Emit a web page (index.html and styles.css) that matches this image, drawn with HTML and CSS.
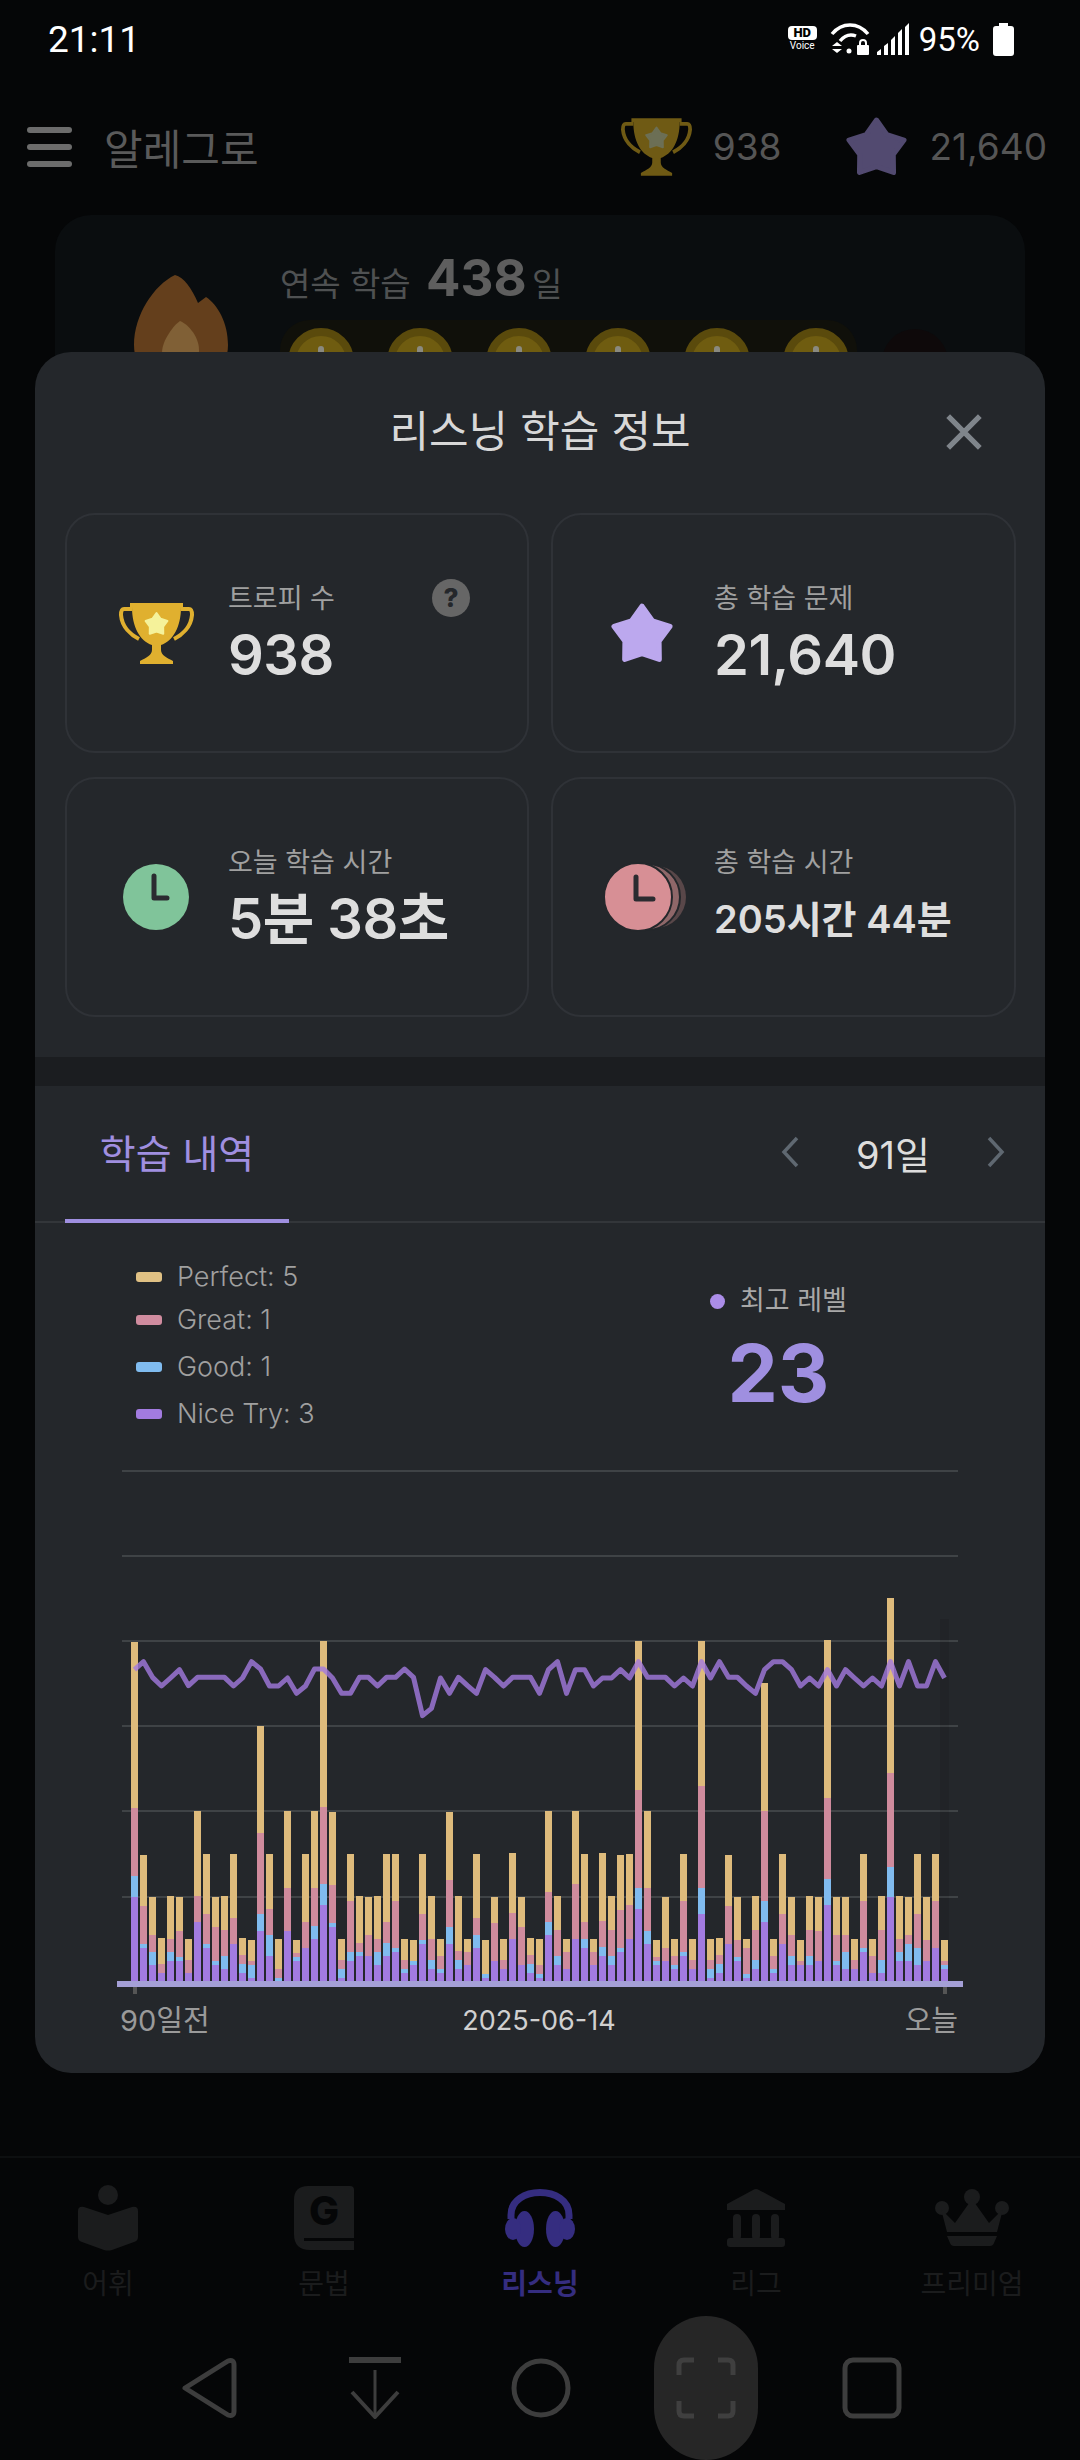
FILE: index.html
```html
<!DOCTYPE html>
<html lang="ko">
  <head>
    <meta charset="UTF-8" />
    <meta name="viewport" content="width=device-width, initial-scale=1.0" />
    <title>리스닝 학습 정보</title>
    <link rel="stylesheet" href="styles.css">
  </head>
  <body>
    <!-- shared shapes -->
    <svg class="defs" width="0" height="0">
      <symbol id="star" viewBox="0 0 100 100">
        <polygon fill="currentColor" stroke="currentColor" stroke-width="8" stroke-linejoin="round"
          points="50,8 66.5,31.3 93.7,39.8 76.6,62.7 77,91.2 50,82 23,91.2 23.4,62.7 6.3,39.8 33.5,31.3" />
      </symbol>
      <symbol id="trophy" viewBox="0 0 75 61">
        <path fill="currentColor" d="M11 0H64V4H62C62 24 54 38 42 42V47C42 52 48 55 54 58V61H21V58C27 55 33 52 33 47V42C21 38 13 24 13 4H11Z" />
        <path fill="none" stroke="currentColor" stroke-width="4" d="M13 6H5C2 6 2 9 2 12C3 24 12 32 20 36M62 6H70C73 6 73 9 73 12C72 24 63 32 55 36" />
        <use class="trophy-star" href="#star" x="25" y="7" width="25" height="27" />
      </symbol>
    </svg>

    <div class="screen">
      <!-- status bar -->
      <div class="status">
        <div class="time">21:11</div>
        <div class="status-icons">
          <div class="hd"><span class="hd-badge">HD</span><span class="hd-voice">Voice</span></div>
          <svg class="wifi" width="40" height="32" viewBox="0 0 40 32">
            <path fill="none" stroke="#fff" stroke-width="3.5" d="M2 11C12 -1 28 -1 38 11M10 18C15 12 21 11 26 13" />
            <circle cx="19" cy="28" r="2.5" fill="#fff" />
            <path fill="#fff" d="M7 19L12 23H2ZM2 26H12L7 30Z" />
            <path fill="none" stroke="#fff" stroke-width="2" d="M30 22V20C30 16 36 16 36 20V22" />
            <rect x="27" y="22" width="12" height="10" rx="1" fill="#fff" />
          </svg>
          <svg class="signal" width="32" height="32" viewBox="0 0 32 32">
            <path fill="#fff" d="M0 32V29L4 26V32ZM7 32V23L11 20V32ZM14 32V17L18 13V32ZM21 32V10L25 6V32ZM28 32V4L32 0V32Z" />
          </svg>
          <div class="percent">95%</div>
          <svg class="battery" width="21" height="33" viewBox="0 0 21 33">
            <path fill="#fff" d="M6 0H15V3H18Q21 3 21 6V30Q21 33 18 33H3Q0 33 0 30V6Q0 3 3 3H6Z" />
          </svg>
        </div>
      </div>

      <!-- app bar behind the sheet -->
      <div class="appbar">
        <div class="menu"><span></span><span></span><span></span></div>
        <div class="app-title">알레그로</div>
        <svg class="bar-trophy" width="71" height="58"><use href="#trophy" /></svg>
        <div class="bar-num">938</div>
        <svg class="bar-star" width="63" height="63"><use href="#star" /></svg>
        <div class="bar-num">21,640</div>
      </div>

      <div class="main">
        <div class="streak">
          <svg class="flame" width="94" height="110" viewBox="0 0 94 110">
            <path fill="#643f1c" d="M41 0C50 2 58 14 64 28L72 22C84 30 94 48 94 70C94 95 75 110 47 110C19 110 0 95 0 70C0 40 20 10 41 0Z" />
            <path fill="#806036" d="M46 46C52 48 65 60 65 75C65 95 56 105 46 105C36 105 28 95 28 78C28 65 40 50 46 46Z" />
          </svg>
          <div>
            <div class="streak-text">연속 학습 <b>438</b> 일</div>
            <div class="streak-row">
              <div class="coins">
                <div class="coin"></div>
                <div class="coin"></div>
                <div class="coin"></div>
                <div class="coin"></div>
                <div class="coin"></div>
                <div class="coin"></div>
              </div>
              <div class="coin coin-next"></div>
            </div>
          </div>
        </div>
      </div>

      <!-- bottom tabs -->
      <div class="tabbar">
        <div class="tab-item">
          <svg width="60" height="66" viewBox="0 0 60 66">
            <circle cx="30" cy="10" r="10" fill="currentColor" />
            <path fill="currentColor" d="M0 26Q0 21 6 22L30 30L54 22Q60 21 60 26V52Q60 56 56 57L34 65Q30 66 26 65L4 57Q0 56 0 52Z" />
          </svg>
          <div>어휘</div>
        </div>
        <div class="tab-item">
          <svg width="60" height="66" viewBox="0 0 60 66">
            <path fill="currentColor" d="M14 1H56Q60 1 60 5V65H16Q0 65 0 49V15Q0 1 14 1Z" />
            <rect x="10" y="53" width="50" height="3" fill="#050607" />
            <text class="book-letter" x="30" y="40" text-anchor="middle">G</text>
          </svg>
          <div>문법</div>
        </div>
        <div class="tab-item tab-on">
          <svg width="70" height="66" viewBox="0 -4 70 66">
            <path fill="none" stroke="currentColor" stroke-width="7" d="M6 30V26C6 -4 64 -4 64 26V30" />
            <ellipse cx="19.5" cy="40" rx="9.5" ry="18" fill="currentColor" />
            <ellipse cx="8" cy="40" rx="8" ry="11" fill="currentColor" />
            <ellipse cx="50.5" cy="40" rx="9.5" ry="18" fill="currentColor" />
            <ellipse cx="62" cy="40" rx="8" ry="11" fill="currentColor" />
          </svg>
          <div>리스닝</div>
        </div>
        <div class="tab-item">
          <svg width="58" height="66" viewBox="0 -4 58 66">
            <path fill="currentColor" d="M26 1Q29 -1 32 1L58 15V21H0V15Z" />
            <rect x="6" y="25" width="8" height="26" rx="4" fill="currentColor" />
            <rect x="25" y="25" width="8" height="26" rx="4" fill="currentColor" />
            <rect x="44" y="25" width="8" height="26" rx="4" fill="currentColor" />
            <rect x="0" y="49" width="58" height="9" rx="3" fill="currentColor" />
          </svg>
          <div>리그</div>
        </div>
        <div class="tab-item">
          <svg width="74" height="66" viewBox="0 -4 74 66">
            <circle cx="37" cy="8" r="8" fill="currentColor" />
            <circle cx="7" cy="19" r="7" fill="currentColor" />
            <circle cx="67" cy="19" r="7" fill="currentColor" />
            <path fill="currentColor" d="M6 20L20 34L37 10L54 34L68 20L62 43H12Z" />
            <path fill="currentColor" d="M12 47H62L59 54Q58 57 55 57H19Q16 57 15 54Z" />
          </svg>
          <div>프리미엄</div>
        </div>
      </div>

      <!-- system keys -->
      <div class="keys">
        <div class="key">
          <svg width="56" height="62" viewBox="0 0 56 62" class="key-icon">
            <path d="M3 31L46 4Q52 2 52 8V54Q52 60 46 58Z" />
          </svg>
        </div>
        <div class="key">
          <svg width="56" height="62" viewBox="0 0 56 62" class="key-icon">
            <path stroke-width="6" d="M2 3H54" />
            <path stroke-width="3" d="M28 13V58" />
            <path stroke-width="4" d="M5 35L28 60L51 35" />
          </svg>
        </div>
        <div class="key">
          <svg width="60" height="62" viewBox="0 0 60 62" class="key-icon">
            <circle cx="30" cy="31" r="27" />
          </svg>
        </div>
        <div class="key">
          <div class="key-pill">
            <svg width="60" height="62" viewBox="0 0 60 62" class="key-icon key-dim">
              <path d="M18 3H8Q3 3 3 8V18M42 3H52Q57 3 57 8V18M18 59H8Q3 59 3 54V44M42 59H52Q57 59 57 54V44" />
            </svg>
          </div>
        </div>
        <div class="key">
          <svg width="60" height="62" viewBox="0 0 60 62" class="key-icon">
            <rect x="3" y="3" width="54" height="56" rx="8" />
          </svg>
        </div>
      </div>

      <!-- 리스닝 학습 정보 sheet -->
      <div class="sheet">
        <div class="sheet-head">
          <div class="sheet-title">리스닝 학습 정보</div>
          <svg class="close" width="38" height="38" viewBox="0 0 36 36">
            <path d="M3 3L33 33M33 3L3 33" />
          </svg>
        </div>

        <div class="cards">
          <div class="card">
            <div class="card-icon">
              <svg width="75" height="61"><use class="gold" href="#trophy" /></svg>
            </div>
            <div class="card-text">
              <div class="card-label">트로피 수</div>
              <div class="card-value">938</div>
            </div>
            <div class="help">?</div>
          </div>
          <div class="card">
            <div class="card-icon">
              <svg class="violet" width="64" height="64"><use href="#star" /></svg>
            </div>
            <div class="card-text">
              <div class="card-label">총 학습 문제</div>
              <div class="card-value">21,640</div>
            </div>
          </div>
          <div class="card">
            <div class="card-icon">
              <svg width="66" height="66" viewBox="0 0 66 66">
                <circle cx="33" cy="33" r="33" fill="#80c49a" />
                <path class="hand" d="M31 12V34H44" />
              </svg>
            </div>
            <div class="card-text">
              <div class="card-label">오늘 학습 시간</div>
              <div class="card-value">5분 38초</div>
            </div>
          </div>
          <div class="card">
            <div class="card-icon">
              <svg width="90" height="70" viewBox="0 0 90 70">
                <circle cx="58" cy="35" r="31" fill="#594749" />
                <circle cx="50" cy="35" r="33" fill="#8f6769" stroke="#24272b" stroke-width="2" />
                <circle cx="41" cy="35" r="34" fill="#d78f95" stroke="#24272b" stroke-width="2" />
                <path class="hand" d="M39 15V37H56" />
              </svg>
            </div>
            <div class="card-text">
              <div class="card-label">총 학습 시간</div>
              <div class="card-value card-value-sm">205시간 44분</div>
            </div>
          </div>
        </div>

        <div class="band"></div>

        <div class="tabs">
          <div class="tab-active">학습 내역</div>
          <div class="period">
            <svg class="chev" width="18" height="32" viewBox="0 0 18 32"><path d="M16 2L3 16L16 30" /></svg>
            <div class="period-text">91일</div>
            <svg class="chev" width="18" height="32" viewBox="0 0 18 32"><path d="M2 2L15 16L2 30" /></svg>
          </div>
        </div>

        <div class="summary">
          <div class="legend">
            <div class="legend-row"><span class="swatch swatch-perfect"></span>Perfect: 5</div>
            <div class="legend-row"><span class="swatch swatch-great"></span>Great: 1</div>
            <div class="legend-row"><span class="swatch swatch-good"></span>Good: 1</div>
            <div class="legend-row"><span class="swatch swatch-nice"></span>Nice Try: 3</div>
          </div>
          <div class="best">
            <div class="best-label"><span class="best-dot"></span>최고 레벨</div>
            <div class="best-value">23</div>
          </div>
        </div>

        <svg id="chart" class="chart" width="1010" height="540" viewBox="35 1460 1010 540"></svg>

        <div class="axis">
          <div>90일전</div>
          <div class="axis-mid">2025-06-14</div>
          <div class="axis-end">오늘</div>
        </div>
      </div>
    </div>

    <script>
      // tops of the nice / good / great / perfect parts, in thirds of a pixel from y=1580
      const bars = [
        [954,891,687,189],[1107,1095,981,828],[1158,1119,1068,954],[1182,1182,1155,1077],[1146,1119,1080,951],
        [1146,1134,1056,954],[1182,1182,1143,1080],[1029,1029,951,696],[1107,1095,1005,825],[1158,1146,1044,954],
        [1170,1131,1053,951],[1095,1095,1017,825],[1182,1155,1128,1077],[1197,1158,1146,1083],[1056,1005,762,441],
        [1131,1068,990,825],[1207,1197,1170,1080],[1056,1056,927,696],[1146,1134,1122,1083],[1107,1107,1029,825],
        [1080,1041,927,696],[978,915,684,186],[1044,1032,918,699],[1197,1170,1143,1080],[1146,1119,966,825],
        [1131,1119,1092,951],[1131,1131,1068,954],[1158,1119,1080,951],[1131,1092,1029,825],[1119,1107,966,825],
        [1182,1170,1143,1080],[1158,1146,1146,1083],[1095,1083,1005,825],[1170,1143,1080,951],[1182,1170,1131,1080],
        [1095,1044,903,699],[1170,1143,1116,951],[1158,1158,1119,1080],[1107,1068,1017,825],[1197,1185,1185,1083],
        [1146,1146,1032,954],[1170,1170,1143,1080],[1080,1080,1002,822],[1158,1158,1044,954],[1182,1155,1128,1077],
        [1197,1185,1158,1080],[1068,1029,939,696],[1158,1131,1053,951],[1170,1170,1119,1080],[1080,1080,915,696],
        [1107,1080,1029,825],[1158,1158,1119,1080],[1131,1104,1026,822],[1158,1131,1053,951],[1119,1107,993,828],
        [1080,1080,978,825],[990,927,633,186],[1095,1056,927,696],[1158,1146,1134,1083],[1146,1146,1107,954],
        [1170,1158,1131,1080],[1131,1119,966,825],[1170,1170,1143,1080],[1005,927,621,186],[1197,1170,1143,1080],
        [1182,1155,1128,1077],[1095,1095,981,828],[1146,1134,1083,954],[1197,1185,1107,1080],[1170,1143,1053,951],
        [1029,966,696,312],[1182,1170,1131,1080],[1095,1095,1005,825],[1158,1131,1068,954],[1158,1158,1146,1083],
        [1158,1131,1053,951],[1146,1146,1056,954],[978,900,657,183],[1158,1146,1068,954],[1170,1119,1068,954],
        [1170,1170,1143,1080],[1119,1107,966,825],[1182,1182,1131,1080],[1182,1143,1053,951],[954,864,582,57],
        [1146,1119,1080,951],[1146,1095,1068,954],[1158,1107,1005,825],[1146,1146,1083,954],[1107,1107,966,825],
        [1170,1158,1146,1083]
      ];
      const level = [
        272,248,295,321,297,272,320,295,295,295,295,321,297,248,270,321,321,297,343,321,270,270,297,343,343,295,
        295,321,295,295,270,295,410,388,297,343,295,320,343,272,295,321,295,295,295,343,272,248,343,272,272,321,
        297,297,272,297,248,295,295,295,321,297,321,248,297,248,295,295,321,343,272,248,248,272,321,297,321,272,
        321,272,297,321,297,321,248,321,248,321,321,248,297
      ];
      const partClass = ["part-nice", "part-good", "part-great", "part-perfect"];
      const toY = (v) => 1580 + v / 3;
      let out = "";

      // grid
      [1471, 1556, 1641, 1726, 1811, 1897].forEach((y) => {
        out += `<rect class="grid" x="122" y="${y}" width="836" height="2" />`;
      });
      out += `<rect class="shade" x="940" y="1620" width="9" height="362" />`;

      // stacked bars
      bars.forEach((tops, i) => {
        const x = 131 + i * 9;
        let bottom = 1207;
        tops.forEach((top, p) => {
          if (top < bottom) {
            out += `<rect class="${partClass[p]}" x="${x}" y="${toY(top)}" width="7" height="${(bottom - top) / 3}" />`;
            bottom = top;
          }
        });
      });

      // axis and ticks
      out += `<rect class="axis-bar" x="117" y="1982" width="846" height="6" />`;
      out += `<rect class="tick" x="133" y="1988" width="4" height="7" />`;
      out += `<rect class="tick" x="943" y="1988" width="4" height="7" />`;

      // level line
      const pts = level.map((v, i) => `${134.5 + i * 9},${toY(v)}`).join(" ");
      out += `<polyline class="level-line" points="${pts}" />`;

      document.getElementById("chart").innerHTML = out;
    </script>
  </body>
</html>
```

FILE: styles.css
```css
/* page */
body {
  margin: 0;
  background-color: #050607;
  font-family: Inter, "Noto Sans CJK KR", sans-serif;
}

.defs {
  position: absolute;
}

.screen {
  position: relative;
  width: 1080px;
  height: 2460px;
  display: flex;
  flex-direction: column;
  overflow: hidden;
  background-color: #050607;
}

.trophy-star {
  color: var(--star-fill, #f5f29a);
}

/* status bar */
.status {
  height: 78px;
  display: flex;
  justify-content: space-between;
  align-items: center;
  padding: 0 66px 0 48px;
  color: #fff;
  font-family: Roboto, sans-serif;
}

.time {
  font-size: 37px;
}

.status-icons {
  display: flex;
  align-items: center;
}

.hd {
  width: 29px;
  display: flex;
  flex-direction: column;
  align-items: center;
}

.hd-badge {
  width: 29px;
  height: 14px;
  background-color: #fff;
  color: #000;
  border-radius: 4px;
  font-size: 13px;
  font-weight: 900;
  line-height: 14px;
  text-align: center;
}

.hd-voice {
  font-size: 10px;
  line-height: 12px;
}

.wifi {
  margin-left: 13px;
}

.signal {
  margin-left: 7px;
}

.percent {
  margin-left: 10px;
  font-size: 33px;
}

.battery {
  margin-left: 13px;
}

/* app bar */
.appbar {
  height: 137px;
  display: flex;
  align-items: center;
  padding: 0 33px 0 27px;
}

.menu {
  width: 45px;
  display: flex;
  flex-direction: column;
  gap: 11px;
}

.menu span {
  height: 6px;
  border-radius: 3px;
  background-color: #6c6c6c;
}

.app-title {
  margin-left: 32px;
  font-size: 42px;
  color: #5a5a5a;
}

.bar-trophy {
  margin-left: auto;
  color: #6f5a14;
  --star-fill: #6c6f55;
}

.bar-star {
  margin-left: 64px;
  color: #524a70;
}

.bar-num {
  margin-left: 21px;
  font-size: 37px;
  color: #555;
}

/* streak card behind the sheet */
.main {
  flex: 1;
  padding: 0 55px;
  overflow: hidden;
}

.streak {
  height: 400px;
  display: flex;
  align-items: flex-start;
  padding: 38px 0 0 79px;
  border-radius: 36px;
  background-color: #0a0d0f;
}

.flame {
  margin: 22px 52px 0 0;
}

.streak-text {
  height: 62px;
  font-size: 33px;
  line-height: 50px;
  color: #4f5152;
}

.streak-text b {
  margin: 0 -4px 0 6px;
  font-size: 51px;
  color: #5e5e5e;
}

.streak-row {
  margin-top: 5px;
  display: flex;
  align-items: flex-start;
}

.coins {
  display: flex;
  gap: 33px;
  padding: 8px;
  border-radius: 30px;
  background-color: #10100a;
}

.coin {
  position: relative;
  box-sizing: border-box;
  width: 66px;
  height: 66px;
  border: 8px solid #5a4a0c;
  border-radius: 50%;
  background-color: #6f5c10;
}

.coin::after {
  content: "";
  position: absolute;
  left: 22px;
  top: 10px;
  width: 6px;
  height: 20px;
  border-radius: 3px;
  background-color: #8a8a80;
}

.coin-next {
  margin: 9px 0 0 25px;
  border: none;
  background-color: #0e090a;
}

.coin-next::after {
  display: none;
}

/* bottom tabs */
.tabbar {
  height: 160px;
  box-sizing: border-box;
  display: flex;
  border-top: 2px solid #0d0f10;
  color: #1b1c1d;
}

.tab-item {
  width: 216px;
  padding-top: 27px;
  display: flex;
  flex-direction: column;
  align-items: center;
  gap: 13px;
  font-size: 28px;
  line-height: 40px;
}

.tab-on {
  color: #352d80;
  font-weight: 700;
}

.book-letter {
  font-size: 40px;
  font-weight: 800;
  fill: #050607;
}

/* system keys */
.keys {
  height: 144px;
  display: flex;
  padding-left: 127px;
}

.key {
  width: 165.5px;
  display: flex;
  justify-content: center;
  align-items: center;
}

.key-icon {
  fill: none;
  stroke: #3d3d3d;
  stroke-width: 5;
  stroke-linejoin: round;
}

.key-pill {
  width: 104px;
  height: 144px;
  display: flex;
  justify-content: center;
  align-items: center;
  border-radius: 52px;
  background-color: #262626;
}

.key-dim {
  stroke: #3f3f3f;
}

/* sheet */
.sheet {
  position: absolute;
  left: 35px;
  top: 352px;
  width: 1010px;
  height: 1721px;
  border-radius: 36px;
  background-color: #24272b;
  overflow: hidden;
}

.sheet-head {
  position: relative;
  height: 161px;
}

.sheet-title {
  padding-top: 50px;
  font-size: 43px;
  line-height: 58px;
  text-align: center;
  color: #d8d8d8;
}

.close {
  position: absolute;
  right: 62px;
  top: 61px;
  fill: none;
  stroke: #7f858b;
  stroke-width: 5;
}

.cards {
  display: grid;
  grid-template-columns: 464px 465px;
  grid-auto-rows: 240px;
  gap: 24px 22px;
  padding: 0 30px;
}

.card {
  position: relative;
  box-sizing: border-box;
  display: flex;
  align-items: center;
  padding-left: 44px;
  border: 2px solid #2f3237;
  border-radius: 30px;
}

.card-icon {
  width: 90px;
  height: 90px;
  margin-right: 27px;
  display: flex;
  justify-content: center;
  align-items: center;
}

.gold {
  color: #e0b02f;
}

.violet {
  color: #bca8ee;
}

.hand {
  fill: none;
  stroke: #2b2b30;
  stroke-width: 5;
  stroke-linecap: round;
  stroke-linejoin: round;
}

.card-text {
  display: flex;
  flex-direction: column;
  gap: 8px;
}

.card-label {
  font-size: 27px;
  line-height: 36px;
  color: #a0a0a0;
}

.card-value {
  font-size: 56px;
  font-weight: 600;
  line-height: 60px;
  letter-spacing: -0.5px;
  color: #dedede;
}

.card-value-sm {
  font-size: 38px;
  letter-spacing: 0;
}

.help {
  position: absolute;
  right: 57px;
  top: 64px;
  width: 38px;
  height: 38px;
  border-radius: 50%;
  background-color: #666;
  color: #24272b;
  font-size: 26px;
  font-weight: 800;
  line-height: 38px;
  text-align: center;
}

.band {
  height: 29px;
  margin-top: 40px;
  background-color: #1b1d20;
}

/* history tab */
.tabs {
  height: 137px;
  box-sizing: border-box;
  display: flex;
  justify-content: space-between;
  border-bottom: 2px solid #33363a;
}

.tab-active {
  width: 224px;
  height: 137px;
  box-sizing: border-box;
  margin-left: 30px;
  border-bottom: 4px solid #9f8fe0;
  font-size: 39px;
  line-height: 136px;
  text-align: center;
  color: #a08fe0;
}

.period {
  display: flex;
  align-items: center;
  gap: 57px;
  padding: 0 40px 0 0;
  height: 132px;
}

.period-text {
  font-size: 38px;
  color: #ddd;
}

.chev {
  fill: none;
  stroke: #5f6871;
  stroke-width: 3.5;
}

.summary {
  height: 236px;
  display: flex;
}

.legend {
  width: 574px;
  padding: 30px 0 0 101px;
}

.legend-row {
  display: flex;
  align-items: center;
  gap: 15px;
  height: 47px;
  font-size: 27px;
  font-weight: 300;
  color: #a0a0a0;
}

.legend-row:first-child {
  margin-bottom: -4px;
}

.swatch {
  width: 26px;
  height: 10px;
  border-radius: 3px;
}

.swatch-perfect {
  background-color: #e0c184;
}

.swatch-great {
  background-color: #d08c9f;
}

.swatch-good {
  background-color: #80bcf0;
}

.swatch-nice {
  background-color: #a27be0;
}

.best {
  padding-top: 58px;
  display: flex;
  flex-direction: column;
  align-items: center;
}

.best-label {
  display: flex;
  align-items: center;
  gap: 15px;
  font-size: 27px;
  line-height: 40px;
  color: #a8a8a8;
}

.best-dot {
  width: 15px;
  height: 15px;
  border-radius: 50%;
  background-color: #ab8de8;
}

.best-value {
  margin-top: 6px;
  font-size: 80px;
  font-weight: 700;
  line-height: 92px;
  color: #9f8fe0;
}

/* chart */
.chart {
  display: block;
}

.grid {
  fill: #3f4346;
}

.shade {
  fill: rgba(0, 0, 0, 0.08);
}

.part-perfect {
  fill: #debb7c;
}

.part-great {
  fill: #cf8b9d;
}

.part-good {
  fill: #80bbef;
}

.part-nice {
  fill: #a27be0;
}

.axis-bar {
  fill: #a49fd6;
}

.tick {
  fill: #555;
}

.level-line {
  fill: none;
  stroke: rgba(162, 123, 224, 0.8);
  stroke-width: 5;
  stroke-linejoin: round;
}

.axis {
  display: grid;
  grid-template-columns: 1fr auto 1fr;
  padding: 0 87px 0 85px;
  font-size: 29px;
  line-height: 44px;
  color: #9a9a9a;
}

.axis-mid {
  font-size: 27px;
  color: #d0d0d0;
}

.axis-end {
  text-align: right;
}
```
